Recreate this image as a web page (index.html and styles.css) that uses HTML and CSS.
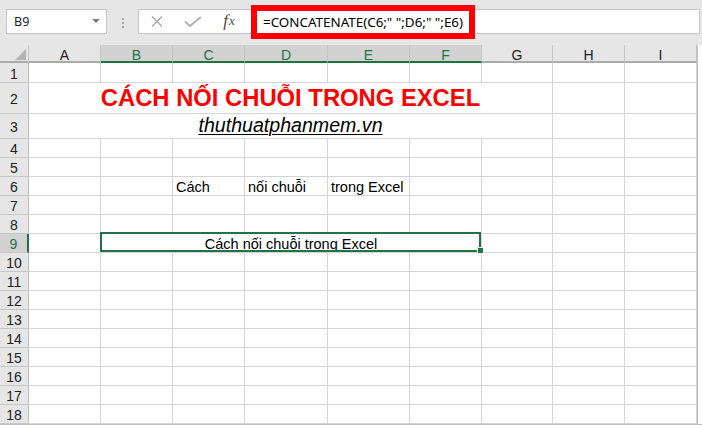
FILE: index.html
```html
<!DOCTYPE html>
<html lang="vi">
<head>
    <meta charset="UTF-8">
    <meta name="viewport" content="width=device-width, initial-scale=1.0">
    <title>Cách nối chuỗi trong Excel</title>
    <link rel="stylesheet" href="styles.css">
</head>
<body>
    <div class="app">
        <div class="toolbar">
            <div class="namebox">
                <span>B9</span>
                <span class="arrow"></span>
            </div>
            <div class="grip"><i></i><i></i><i></i></div>
            <div class="fbar">
                <div class="fbtn">
                    <svg width="12" height="11" viewBox="0 0 12 11"><path d="M1 0.5L11 10.5M11 0.5L1 10.5" stroke="#a9a9a9" stroke-width="1.3" fill="none"/></svg>
                </div>
                <div class="fbtn">
                    <svg width="18" height="11" viewBox="0 0 18 11"><path d="M1 5.5L6 10L17 1" stroke="#b3b3b3" stroke-width="2" fill="none"/></svg>
                </div>
                <div class="fbtn fx"><i>f</i><span>x</span></div>
                <div class="formula">=CONCATENATE(C6;" ";D6;" ";E6)</div>
            </div>
        </div>

        <div class="sheet-wrap">
            <div class="sheet">
                <!-- column headers -->
                <div class="corner"></div>
                <div class="ch">A</div>
                <div class="ch on">B</div>
                <div class="ch on">C</div>
                <div class="ch on">D</div>
                <div class="ch on">E</div>
                <div class="ch on">F</div>
                <div class="ch">G</div>
                <div class="ch">H</div>
                <div class="ch">I</div>

                <div class="rh">1</div>
                <div class="c"></div><div class="c"></div><div class="c"></div><div class="c"></div><div class="c"></div><div class="c"></div><div class="c"></div><div class="c"></div><div class="c"></div>

                <div class="rh">2</div>
                <div class="c span7 title">CÁCH NỐI CHUỖI TRONG EXCEL</div>
                <div class="c"></div><div class="c"></div>

                <div class="rh">3</div>
                <div class="c span7 site">thuthuatphanmem.vn</div>
                <div class="c"></div><div class="c"></div>

                <div class="rh">4</div>
                <div class="c"></div><div class="c"></div><div class="c"></div><div class="c"></div><div class="c"></div><div class="c"></div><div class="c"></div><div class="c"></div><div class="c"></div>

                <div class="rh">5</div>
                <div class="c"></div><div class="c"></div><div class="c"></div><div class="c"></div><div class="c"></div><div class="c"></div><div class="c"></div><div class="c"></div><div class="c"></div>

                <div class="rh">6</div>
                <div class="c"></div><div class="c"></div>
                <div class="c">Cách</div>
                <div class="c">nối chuỗi</div>
                <div class="c">trong Excel</div>
                <div class="c"></div><div class="c"></div><div class="c"></div><div class="c"></div>

                <div class="rh">7</div>
                <div class="c"></div><div class="c"></div><div class="c"></div><div class="c"></div><div class="c"></div><div class="c"></div><div class="c"></div><div class="c"></div><div class="c"></div>

                <div class="rh">8</div>
                <div class="c"></div><div class="c"></div><div class="c"></div><div class="c"></div><div class="c"></div><div class="c"></div><div class="c"></div><div class="c"></div><div class="c"></div>

                <div class="rh on">9</div>
                <div class="c"></div>
                <div class="c span5 merged">
                    Cách nối chuỗi trong Excel
                    <div class="sel"><span class="handle"></span></div>
                </div>
                <div class="c"></div><div class="c"></div><div class="c"></div>

                <div class="rh">10</div>
                <div class="c"></div><div class="c"></div><div class="c"></div><div class="c"></div><div class="c"></div><div class="c"></div><div class="c"></div><div class="c"></div><div class="c"></div>

                <div class="rh">11</div>
                <div class="c"></div><div class="c"></div><div class="c"></div><div class="c"></div><div class="c"></div><div class="c"></div><div class="c"></div><div class="c"></div><div class="c"></div>

                <div class="rh">12</div>
                <div class="c"></div><div class="c"></div><div class="c"></div><div class="c"></div><div class="c"></div><div class="c"></div><div class="c"></div><div class="c"></div><div class="c"></div>

                <div class="rh">13</div>
                <div class="c"></div><div class="c"></div><div class="c"></div><div class="c"></div><div class="c"></div><div class="c"></div><div class="c"></div><div class="c"></div><div class="c"></div>

                <div class="rh">14</div>
                <div class="c"></div><div class="c"></div><div class="c"></div><div class="c"></div><div class="c"></div><div class="c"></div><div class="c"></div><div class="c"></div><div class="c"></div>

                <div class="rh">15</div>
                <div class="c"></div><div class="c"></div><div class="c"></div><div class="c"></div><div class="c"></div><div class="c"></div><div class="c"></div><div class="c"></div><div class="c"></div>

                <div class="rh">16</div>
                <div class="c"></div><div class="c"></div><div class="c"></div><div class="c"></div><div class="c"></div><div class="c"></div><div class="c"></div><div class="c"></div><div class="c"></div>

                <div class="rh">17</div>
                <div class="c"></div><div class="c"></div><div class="c"></div><div class="c"></div><div class="c"></div><div class="c"></div><div class="c"></div><div class="c"></div><div class="c"></div>

                <div class="rh">18</div>
                <div class="c"></div><div class="c"></div><div class="c"></div><div class="c"></div><div class="c"></div><div class="c"></div><div class="c"></div><div class="c"></div><div class="c"></div>
            </div>
            <div class="vedge"></div>
        </div>
        <div class="hedge"></div>
    </div>
</body>
</html>
```

FILE: styles.css
```css
:root {
    --excel-green: #217346;
    --grid: #d4d4d4;
    --head-bg: #e6e6e6;
    --head-on: #d2d2d2;
    --head-line: #c6c6c6;
}

* {
    margin: 0;
    padding: 0;
    box-sizing: border-box;
}

body {
    font-family: 'Liberation Sans', Arial, sans-serif;
    background: #fff;
}

.app {
    width: 702px;
    height: 427px;
    overflow: hidden;
    background: #fff;
}

/* Thanh công thức */
.toolbar {
    height: 45px;
    background: #e6e6e6;
    display: flex;
    align-items: flex-start;
    padding: 9px 2px 0 6px;
}

.namebox {
    width: 101px;
    height: 25px;
    background: #fff;
    border: 1px solid var(--head-line);
    display: flex;
    align-items: center;
    justify-content: space-between;
    padding: 0 6px 0 7px;
    font-family: 'Noto Sans', sans-serif;
    font-size: 12.5px;
    color: #222;
}

.arrow {
    width: 0;
    height: 0;
    border-left: 4px solid transparent;
    border-right: 4px solid transparent;
    border-top: 4px solid #7a7a7a;
    margin-bottom: 1px;
}

.grip {
    width: 31px;
    display: flex;
    flex-direction: column;
    align-items: center;
    gap: 2px;
    padding-top: 9px;
}

.grip i {
    display: block;
    width: 2px;
    height: 2px;
    background: #a6a6a6;
}

.fbar {
    flex: 1;
    height: 25px;
    background: #fff;
    border: 1px solid var(--head-line);
    display: flex;
    align-items: center;
}

.fbtn {
    width: 36px;
    display: flex;
    justify-content: center;
    align-items: center;
}

.fbtn.fx {
    font-family: 'Liberation Serif', serif;
    font-size: 17px;
    color: #4a4a4a;
    padding-bottom: 1px;
}

.fbtn.fx span {
    font-style: italic;
    font-size: 13px;
    margin-left: 1px;
}

.formula {
    margin-left: 4px;
    margin-top: 1px;
    height: 34px;
    border: 6px solid #ff0000;
    background: #fff;
    padding: 0 6px;
    display: flex;
    align-items: center;
    font-family: 'Noto Sans', sans-serif;
    font-size: 13.4px;
    color: #000;
    white-space: nowrap;
}

/* Bảng tính */
.sheet-wrap {
    display: flex;
}

.sheet {
    display: grid;
    grid-template-columns: 29px 72px 72px 72px 83px 82px 72px 71px 72px 72px;
    grid-template-rows: 18px 20px 31px 25px repeat(15, 19px);
}

.vedge {
    flex: 1;
    border-left: 1px solid #bdbdbd;
    background: #fff;
}

.hedge {
    height: 3px;
    border-top: 1px solid #bdbdbd;
    background: #fff;
}

.corner {
    background: var(--head-bg);
    border-right: 1px solid var(--head-line);
    border-bottom: 2px solid #ababab;
    display: flex;
    justify-content: flex-end;
    align-items: flex-end;
    padding: 0 2px 1px 0;
}

.corner::after {
    content: "";
    border-left: 11px solid transparent;
    border-bottom: 11px solid #b4b4b4;
}

.ch {
    background: var(--head-bg);
    border-right: 1px solid var(--head-line);
    border-bottom: 2px solid #ababab;
    display: flex;
    justify-content: center;
    align-items: center;
    padding-top: 3px;
    font-size: 14px;
    line-height: 1;
    color: #222;
}

.ch.on {
    background: var(--head-on);
    color: var(--excel-green);
    border-bottom-color: var(--excel-green);
}

.rh {
    background: var(--head-bg);
    border-right: 1px solid #bdbdbd;
    border-bottom: 1px solid var(--head-line);
    display: flex;
    justify-content: center;
    align-items: center;
    padding-top: 2px;
    font-size: 14px;
    line-height: 1;
    color: #222;
}

.rh.on {
    background: var(--head-on);
    color: var(--excel-green);
    border-right: 2px solid var(--excel-green);
}

.c {
    border-right: 1px solid var(--grid);
    border-bottom: 1px solid var(--grid);
    display: flex;
    align-items: flex-end;
    padding: 0 3px 1px;
    font-size: 14.5px;
    line-height: 1;
    color: #000;
    white-space: nowrap;
}

.span7 {
    grid-column: span 7;
    justify-content: center;
}

.span5 {
    grid-column: span 5;
    justify-content: center;
}

.title {
    font-size: 23.8px;
    font-weight: bold;
    color: #ff0000;
    padding-bottom: 3px;
}

.site {
    font-size: 19.6px;
    font-style: italic;
    text-decoration: underline;
    text-decoration-thickness: 1px;
    text-underline-offset: 2px;
    padding-bottom: 2px;
}

.merged {
    position: relative;
}

.sel {
    position: absolute;
    top: -2px;
    left: -1px;
    right: 0;
    bottom: 0;
    border: 2px solid var(--excel-green);
    z-index: 2;
}

.handle {
    position: absolute;
    right: -5px;
    bottom: -4px;
    width: 7px;
    height: 7px;
    background: var(--excel-green);
    border: 1px solid #fff;
}
```
